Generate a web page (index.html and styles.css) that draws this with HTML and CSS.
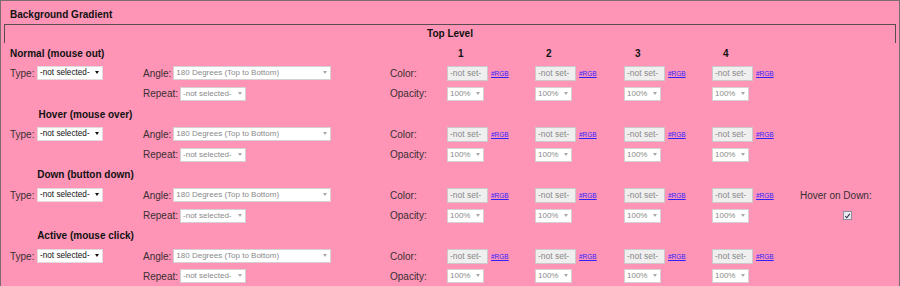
FILE: index.html
```html
<!DOCTYPE html>
<html lang="en">

<head>
  <meta charset="UTF-8">
  <meta name="viewport" content="width=device-width, initial-scale=1.0">
  <title>Background Gradient</title>
  <link rel="stylesheet" href="styles.css">
</head>

<body>
  <div class="panel">
    <div class="panel-title">Background Gradient</div>
    <div class="top-level">Top Level</div>

    <!-- Normal -->
    <div class="state">
      <div class="state-head">
        <span class="state-name">Normal (mouse out)</span>
        <span class="col-num n1">1</span>
        <span class="col-num n2">2</span>
        <span class="col-num n3">3</span>
        <span class="col-num n4">4</span>
      </div>
      <div class="row">
        <label class="lbl">Type:</label>
        <span class="sel sel-type"><select><option>-not selected-</option></select></span>
        <div class="pair"><label class="lbl">Angle:</label><span class="sel sel-angle dim"><select><option>180 Degrees (Top to Bottom)</option></select></span></div>
        <label class="lbl">Color:</label>
        <div class="color"><input type="text" value="-not set-" readonly><a href="#">#RGB</a></div>
        <div class="color"><input type="text" value="-not set-" readonly><a href="#">#RGB</a></div>
        <div class="color"><input type="text" value="-not set-" readonly><a href="#">#RGB</a></div>
        <div class="color"><input type="text" value="-not set-" readonly><a href="#">#RGB</a></div>
      </div>
      <div class="row">
        <div class="pair"><label class="lbl">Repeat:</label><span class="sel sel-repeat dim"><select><option>-not selected-</option></select></span></div>
        <label class="lbl">Opacity:</label>
        <div class="op"><span class="sel sel-op dim"><select><option>100%</option></select></span></div>
        <div class="op"><span class="sel sel-op dim"><select><option>100%</option></select></span></div>
        <div class="op"><span class="sel sel-op dim"><select><option>100%</option></select></span></div>
        <div class="op"><span class="sel sel-op dim"><select><option>100%</option></select></span></div>
      </div>
    </div>

    <!-- Hover -->
    <div class="state">
      <div class="state-head">
        <span class="state-name sub">Hover (mouse over)</span>
      </div>
      <div class="row">
        <label class="lbl">Type:</label>
        <span class="sel sel-type"><select><option>-not selected-</option></select></span>
        <div class="pair"><label class="lbl">Angle:</label><span class="sel sel-angle dim"><select><option>180 Degrees (Top to Bottom)</option></select></span></div>
        <label class="lbl">Color:</label>
        <div class="color"><input type="text" value="-not set-" readonly><a href="#">#RGB</a></div>
        <div class="color"><input type="text" value="-not set-" readonly><a href="#">#RGB</a></div>
        <div class="color"><input type="text" value="-not set-" readonly><a href="#">#RGB</a></div>
        <div class="color"><input type="text" value="-not set-" readonly><a href="#">#RGB</a></div>
      </div>
      <div class="row">
        <div class="pair"><label class="lbl">Repeat:</label><span class="sel sel-repeat dim"><select><option>-not selected-</option></select></span></div>
        <label class="lbl">Opacity:</label>
        <div class="op"><span class="sel sel-op dim"><select><option>100%</option></select></span></div>
        <div class="op"><span class="sel sel-op dim"><select><option>100%</option></select></span></div>
        <div class="op"><span class="sel sel-op dim"><select><option>100%</option></select></span></div>
        <div class="op"><span class="sel sel-op dim"><select><option>100%</option></select></span></div>
      </div>
    </div>

    <!-- Down -->
    <div class="state">
      <div class="state-head">
        <span class="state-name sub">Down (button down)</span>
      </div>
      <div class="row">
        <label class="lbl">Type:</label>
        <span class="sel sel-type"><select><option>-not selected-</option></select></span>
        <div class="pair"><label class="lbl">Angle:</label><span class="sel sel-angle dim"><select><option>180 Degrees (Top to Bottom)</option></select></span></div>
        <label class="lbl">Color:</label>
        <div class="color"><input type="text" value="-not set-" readonly><a href="#">#RGB</a></div>
        <div class="color"><input type="text" value="-not set-" readonly><a href="#">#RGB</a></div>
        <div class="color"><input type="text" value="-not set-" readonly><a href="#">#RGB</a></div>
        <div class="color"><input type="text" value="-not set-" readonly><a href="#">#RGB</a></div>
        <label class="lbl extra">Hover on Down:</label>
      </div>
      <div class="row">
        <div class="pair"><label class="lbl">Repeat:</label><span class="sel sel-repeat dim"><select><option>-not selected-</option></select></span></div>
        <label class="lbl">Opacity:</label>
        <div class="op"><span class="sel sel-op dim"><select><option>100%</option></select></span></div>
        <div class="op"><span class="sel sel-op dim"><select><option>100%</option></select></span></div>
        <div class="op"><span class="sel sel-op dim"><select><option>100%</option></select></span></div>
        <div class="op"><span class="sel sel-op dim"><select><option>100%</option></select></span></div>
        <div class="extra">
          <span class="check">
            <svg width="8" height="8" viewBox="0 0 8 8"><path d="M1.5 4.2 L3.2 6 L6.6 1.6" fill="none" stroke="#2a2f4a" stroke-width="1.2"/></svg>
          </span>
        </div>
      </div>
    </div>

    <!-- Active -->
    <div class="state">
      <div class="state-head">
        <span class="state-name sub">Active (mouse click)</span>
      </div>
      <div class="row">
        <label class="lbl">Type:</label>
        <span class="sel sel-type"><select><option>-not selected-</option></select></span>
        <div class="pair"><label class="lbl">Angle:</label><span class="sel sel-angle dim"><select><option>180 Degrees (Top to Bottom)</option></select></span></div>
        <label class="lbl">Color:</label>
        <div class="color"><input type="text" value="-not set-" readonly><a href="#">#RGB</a></div>
        <div class="color"><input type="text" value="-not set-" readonly><a href="#">#RGB</a></div>
        <div class="color"><input type="text" value="-not set-" readonly><a href="#">#RGB</a></div>
        <div class="color"><input type="text" value="-not set-" readonly><a href="#">#RGB</a></div>
      </div>
      <div class="row">
        <div class="pair"><label class="lbl">Repeat:</label><span class="sel sel-repeat dim"><select><option>-not selected-</option></select></span></div>
        <label class="lbl">Opacity:</label>
        <div class="op"><span class="sel sel-op dim"><select><option>100%</option></select></span></div>
        <div class="op"><span class="sel sel-op dim"><select><option>100%</option></select></span></div>
        <div class="op"><span class="sel sel-op dim"><select><option>100%</option></select></span></div>
        <div class="op"><span class="sel sel-op dim"><select><option>100%</option></select></span></div>
      </div>
    </div>
  </div>
</body>

</html>
```

FILE: styles.css
```css
body {
  margin: 0;
  background: #fe95b6;
  font-family: "Liberation Sans", Arial, sans-serif;
  font-size: 10px;
  color: #3a2e33;
}

.panel {
  border: 1px solid #7d6b72;
  min-height: 320px;
}

.panel-title {
  height: 20px;
  padding: 3px 0 0 9px;
  display: flex;
  align-items: center;
  font-weight: bold;
  color: #111;
}

.top-level {
  margin: 0 3px;
  height: 18px;
  line-height: 18px;
  border: 1px solid #5a4a51;
  border-bottom: 0;
  text-align: center;
  font-weight: bold;
  color: #111;
}

/* rows share the same columns so everything lines up */
.state-head,
.row {
  display: grid;
  grid-template-columns: 27px 106px 247px 57px 88px 89px 88px 88px 1fr;
  align-items: center;
  padding-left: 9px;
  height: 20.3px;
}

.state-name {
  grid-column: 1 / 5;
  font-weight: bold;
  color: #111;
  white-space: nowrap;
}

.state-name.sub {
  grid-column: 2 / 4;
  width: 97px;
  text-align: center;
}

.col-num {
  font-weight: bold;
  color: #111;
  padding-left: 11px;
}

.n1 { grid-column: 5; }
.n2 { grid-column: 6; }
.n3 { grid-column: 7; }
.n4 { grid-column: 8; }

.pair {
  grid-column: 3;
  display: flex;
  align-items: center;
}

.row .pair .lbl {
  margin-right: 2px;
}

.pair + .lbl {
  grid-column: 4;
}

/* selects */
.sel {
  position: relative;
  display: inline-block;
  height: 14px;
}

.sel select {
  -webkit-appearance: none;
  appearance: none;
  box-sizing: border-box;
  height: 14px;
  width: 100%;
  margin: 0;
  padding: 0 12px 0 2px;
  border: 1px solid #e4d9dd;
  border-radius: 0;
  background: #fff;
  font-family: "Liberation Sans", Arial, sans-serif;
  font-size: 8px;
  line-height: 12px;
  color: #8a8a8a;
}

.sel::after {
  content: "";
  position: absolute;
  right: 4px;
  top: 5px;
  border-left: 2.5px solid transparent;
  border-right: 2.5px solid transparent;
  border-top: 3px solid #a9a9a9;
  pointer-events: none;
}

.sel-type select {
  padding-right: 8px;
  font-size: 8.2px;
  color: #111;
}

.sel-type::after {
  border-top-color: #111;
}

.sel.dim select {
  border-color: #d6d0d2;
}

.sel-type {
  width: 66px;
}

.sel-angle {
  width: 158px;
}

.sel-repeat {
  width: 66px;
}

.sel-op {
  width: 37px;
}

/* colour inputs */
.color {
  display: flex;
  align-items: baseline;
}

.color input {
  box-sizing: border-box;
  width: 41px;
  height: 15px;
  margin: 0 3px 0 0;
  padding: 0 2px;
  border: 1px solid #cfc8ca;
  background: #efefef;
  font-family: "Liberation Sans", Arial, sans-serif;
  font-size: 8.5px;
  color: #8a8a8a;
}

.color a {
  font-size: 6.5px;
  color: #3322ff;
}

.op {
  display: flex;
  align-items: center;
}

.extra {
  grid-column: 9;
}

.check {
  display: flex;
  align-items: center;
  justify-content: center;
  width: 7px;
  height: 7px;
  margin-left: 43px;
  border: 1px solid #8e8f9c;
  background: #e9e9ef;
}
```
